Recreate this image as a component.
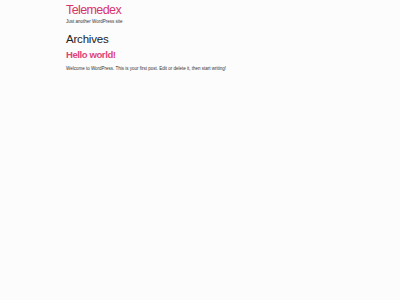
export default function App() {
  return (
    <div className="min-h-[300px] w-[400px] bg-[#fcfcfc] font-['Liberation_Sans',Arial,sans-serif]">
      <div className="pl-[66px] pt-[3px]">
        <header>
          <h1 className="text-[12.5px] leading-[15px] tracking-[-0.6px] text-[#d9326d]">Telemedex</h1>
          <p className="mt-[1px] text-[4.5px] leading-[6px] text-[#333]">Just another WordPress site</p>
        </header>
        <main className="mt-[7px]">
          <h2 className="text-[11.5px] leading-[14px] tracking-[-0.2px] text-[#222]">Archives</h2>
          <article className="mt-[3px]">
            <h3 className="text-[9.5px] leading-[12px] font-bold tracking-[-0.4px] text-[#de4479]">Hello world!</h3>
            <p className="mt-[5px] text-[4.5px] leading-[6px] text-[#333]">
              Welcome to WordPress. This is your first post. Edit or delete it, then start writing!
            </p>
          </article>
        </main>
      </div>
    </div>
  );
}
